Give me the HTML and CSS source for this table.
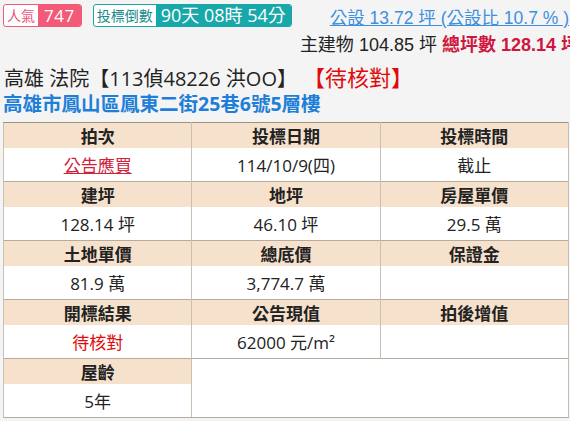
FILE: index.html
```html
<!DOCTYPE html>
<html lang="zh-Hant">
<head>
<meta charset="utf-8">
<link rel="stylesheet" href="styles.css">
</head>
<body>
<div class="page">
  <div class="top">
    <div class="badges">
      <span class="badge badge-pink"><span class="b-label">人氣</span><span class="b-value">747</span></span>
      <span class="badge badge-teal"><span class="b-label">投標倒數</span><span class="b-value">90天 08時 54分</span></span>
    </div>
    <div class="area">
      <a class="area-link" href="#">公設 13.72 坪 (公設比 10.7 % )</a>
      <div class="area-main">主建物 104.85 坪 <b class="total">總坪數 128.14 坪</b></div>
    </div>
  </div>
  <h1 class="title">高雄 法院【113偵48226 洪OO】<span class="status">【待核對】</span></h1>
  <h2 class="address">高雄市鳳山區鳳東二街25巷6號5層樓</h2>
  <table class="info">
    <tr class="hd"><th>拍次</th><th>投標日期</th><th>投標時間</th></tr>
    <tr class="vl"><td><a class="red-link" href="#">公告應買</a></td><td>114/10/9(四)</td><td>截止</td></tr>
    <tr class="hd"><th>建坪</th><th>地坪</th><th>房屋單價</th></tr>
    <tr class="vl"><td>128.14 坪</td><td>46.10 坪</td><td>29.5 萬</td></tr>
    <tr class="hd"><th>土地單價</th><th>總底價</th><th>保證金</th></tr>
    <tr class="vl"><td>81.9 萬</td><td>3,774.7 萬</td><td></td></tr>
    <tr class="hd"><th>開標結果</th><th>公告現值</th><th>拍後增值</th></tr>
    <tr class="vl"><td class="red">待核對</td><td>62000 元/m&sup2;</td><td></td></tr>
    <tr class="hd"><th>屋齡</th><td class="empty" colspan="2" rowspan="2"></td></tr>
    <tr class="vl"><td>5年</td></tr>
  </table>
</div>
</body>
</html>
```

FILE: styles.css
```css
html, body {
  margin: 0;
  padding: 0;
  background: #f4f4f4;
  overflow: hidden;
}
body {
  font-family: "Open Sans", "Noto Sans CJK TC", sans-serif;
  color: #222;
}
.page {
  padding: 0 0 0 3px;
  width: 567px;
}
.top {
  display: flex;
  justify-content: space-between;
  align-items: flex-start;
  height: 60px;
}
.badges {
  display: flex;
  gap: 11px;
  padding-top: 4px;
  flex-shrink: 0;
}
.badge {
  display: inline-flex;
  height: 23px;
  border-radius: 3px;
  overflow: hidden;
  box-sizing: border-box;
  white-space: nowrap;
  line-height: 21px;
}
.b-label {
  display: flex;
  align-items: center;
  padding: 0 3px;
  background: #fff;
  font-size: 14px;
  border-radius: 3px 0 0 3px;
}
.b-value {
  display: flex;
  align-items: center;
  color: #fff;
}
.badge-pink {
  border: 1px solid #f05b7a;
}
.badge-pink .b-label {
  color: #e8557a;
}
.badge-pink .b-value {
  background: #f25a78;
  font-size: 17px;
  padding: 0 6px 0 6px;
  letter-spacing: 0.5px;
}
.badge-teal {
  border: 1px solid #18a6a8;
}
.badge-teal .b-label {
  color: #178a8c;
}
.badge-teal .b-value {
  background: #19a8aa;
  font-size: 18px;
  padding: 0 5px 0 5px;
}
.area {
  text-align: right;
  font-family: "Liberation Sans", "Noto Sans CJK TC", sans-serif;
  padding-top: 7px;
  white-space: nowrap;
}
.area-link {
  color: #3d8fe0;
  font-size: 17.5px;
  text-decoration: underline;
  line-height: 22px;
  margin-right: 1px;
}
.area-main {
  font-size: 18px;
  line-height: 22px;
  margin-top: 5px;
  margin-right: -9px;
  color: #222;
}
.total {
  color: #cf1640;
  font-weight: bold;
}
.title {
  margin: 3px 0 0 1px;
  font-size: 20px;
  font-weight: normal;
  line-height: 28px;
  height: 28px;
  color: #222;
  white-space: nowrap;
}
.status {
  color: #e00b0b;
  font-size: 22px;
  line-height: 28px;
  margin-left: 17px;
}
.address {
  margin: 0;
  font-size: 19.5px;
  font-weight: bold;
  line-height: 26px;
  color: #1f7fd8;
  white-space: nowrap;
}
.info {
  margin-top: 5px;
  width: 566px;
  border-collapse: collapse;
  table-layout: fixed;
  font-size: 17px;
  border-top: 1px solid #9e927f;
}
.info th, .info td {
  text-align: center;
  border-left: 1px solid #c9bfb2;
  border-right: 1px solid #c9bfb2;
  padding: 0;
}
.info tr.hd th {
  background: #f5e1cc;
  height: 25px;
  font-weight: bold;
  color: #222;
  border-top: 1px solid #b6ab9c;
}
.info tr.hd:first-child th {
  border-top: 1px solid #9e927f;
}
.info tr.vl td {
  background: #fff;
  height: 33px;
}
.info td.empty {
  background: #fff;
  border-top: 1px solid #b6ab9c;
}
.info tr:last-child td {
  border-bottom: 1px solid #b6ab9c;
}
.info td.empty {
  border-bottom: 1px solid #b6ab9c;
}
.red-link {
  color: #d0203a;
  text-decoration: underline;
}
.red {
  color: #e00b0b;
}
```
